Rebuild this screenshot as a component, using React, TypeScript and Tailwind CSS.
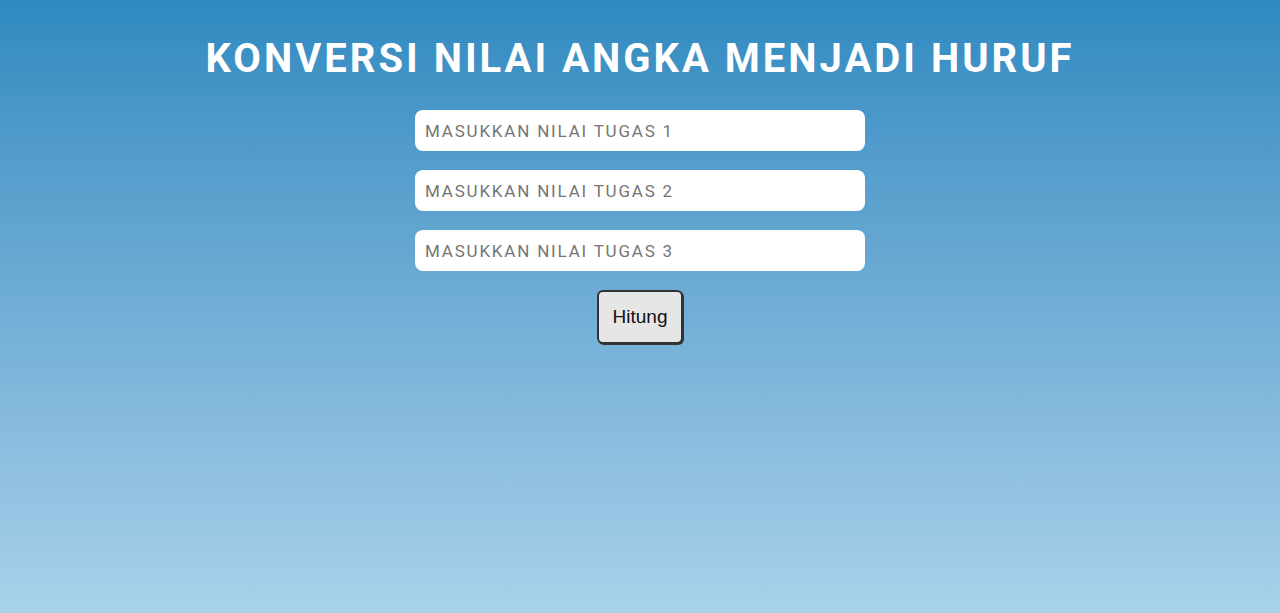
export default function App() {
  return (
    <div className="min-h-[613px] w-full bg-gradient-to-b from-[#2e8ac0] to-[#a9d1ea] flex flex-col items-center font-['Roboto',sans-serif]">
      <h1 className="mt-[36px] text-[40px] leading-[46px] font-bold text-white tracking-[3px]">
        KONVERSI NILAI ANGKA MENJADI HURUF
      </h1>
      <div className="mt-[28px] flex flex-col gap-[19px] w-[450px]">
        <input
          type="text"
          placeholder="MASUKKAN NILAI TUGAS 1"
          className="h-[41px] w-full rounded-[8px] bg-white px-[10px] text-[17px] tracking-[1.8px] outline-none placeholder:text-[#757575]"
        />
        <input
          type="text"
          placeholder="MASUKKAN NILAI TUGAS 2"
          className="h-[41px] w-full rounded-[8px] bg-white px-[10px] text-[17px] tracking-[1.8px] outline-none placeholder:text-[#757575]"
        />
        <input
          type="text"
          placeholder="MASUKKAN NILAI TUGAS 3"
          className="h-[41px] w-full rounded-[8px] bg-white px-[10px] text-[17px] tracking-[1.8px] outline-none placeholder:text-[#757575]"
        />
      </div>
      <button className="mt-[19px] w-[86px] h-[54px] rounded-[6px] border-2 border-[#333] bg-[#e6e6e6] text-[19px] text-[#111] font-['Liberation_Sans',Arial,sans-serif] shadow-[1px_1px_0_#333]">
        Hitung
      </button>
    </div>
  );
}
